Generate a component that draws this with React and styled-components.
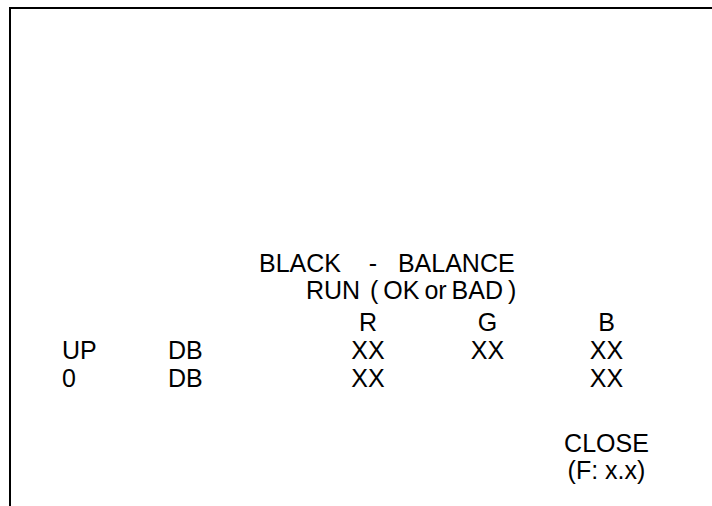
import React from "react";
import styled, { createGlobalStyle } from "styled-components";

const GlobalStyle = createGlobalStyle`
  html, body {
    margin: 0;
    padding: 0;
    background: #ffffff;
    overflow: hidden;
  }
  body {
    font-family: "Liberation Sans", Arial, sans-serif;
    color: #000000;
  }
`;

const Screen = styled.div`
  width: 712px;
  height: 506px;
  padding: 7px 0 0 9px;
  box-sizing: border-box;
  overflow: hidden;
`;

const Frame = styled.div`
  width: 760px;
  height: 560px;
  border-top: 2px solid #000;
  border-left: 2px solid #000;
  box-sizing: border-box;
  padding-top: 241px;
  font-size: 25px;
  line-height: 27px;
  white-space: pre;
`;

const Heading = styled.div`
  padding-left: ${({ indent }) => indent}px;
  word-spacing: ${({ tight }) => (tight ? "-2px" : "0")};
`;

const Table = styled.div`
  display: grid;
  grid-template-columns: 51px 106px 141px 118px 121px 117px;
  margin-top: 5px;
`;

const Row = styled.div`
  display: contents;
`;

const Cell = styled.div`
  grid-column: ${({ col }) => col};
  text-align: ${({ center }) => (center ? "center" : "left")};
  height: 28px;
`;

const Close = styled.div`
  grid-column: 6;
  text-align: center;
  margin-top: 37px;
`;

const rows = [
  { label: "UP", unit: "DB", r: "XX", g: "XX", b: "XX" },
  { label: "0", unit: "DB", r: "XX", g: "", b: "XX" },
];

export default function App() {
  return (
    <>
      <GlobalStyle />
      <Screen>
        <Frame>
          <Heading indent={248}>BLACK    -   BALANCE</Heading>
          <Heading indent={295} tight>RUN  ( OK or BAD )</Heading>
          <Table>
            <Row>
              <Cell col={4} center>R</Cell>
              <Cell col={5} center>G</Cell>
              <Cell col={6} center>B</Cell>
            </Row>
            {rows.map((row, i) => (
              <Row key={i}>
                <Cell col={2}>{row.label}</Cell>
                <Cell col={3}>{row.unit}</Cell>
                <Cell col={4} center>{row.r}</Cell>
                <Cell col={5} center>{row.g}</Cell>
                <Cell col={6} center>{row.b}</Cell>
              </Row>
            ))}
            <Close>
              CLOSE
              <br />
              (F: x.x)
            </Close>
          </Table>
        </Frame>
      </Screen>
    </>
  );
}
